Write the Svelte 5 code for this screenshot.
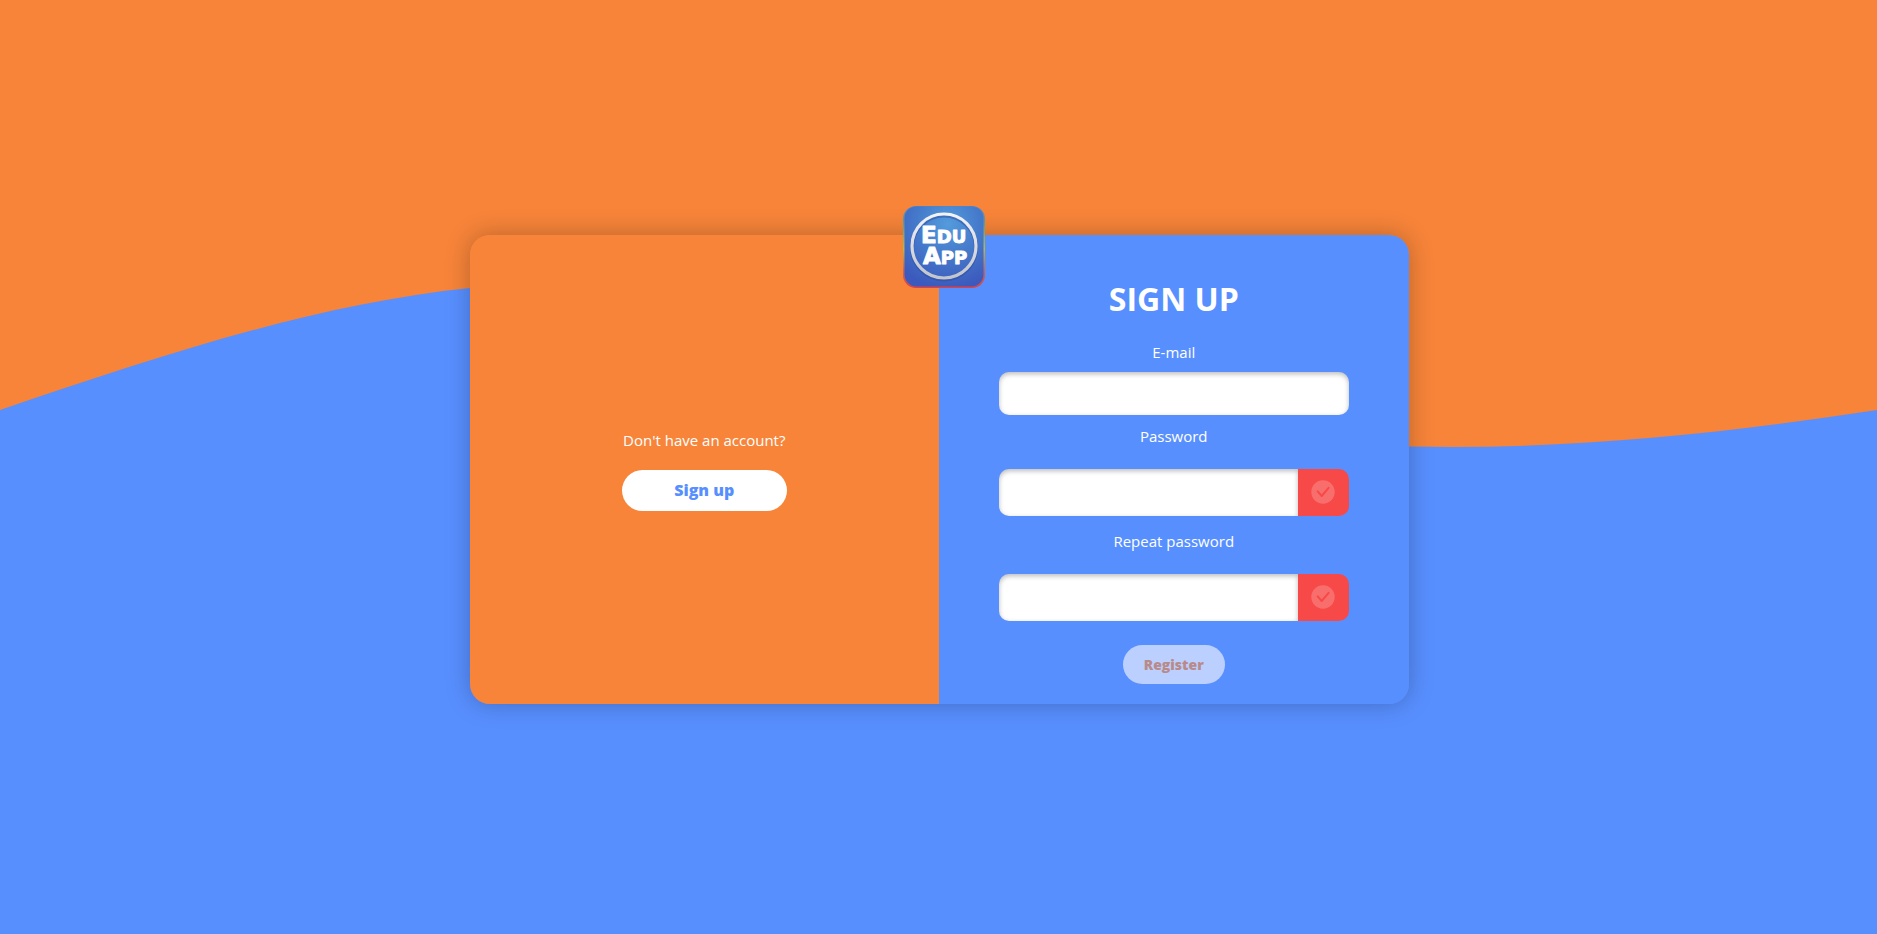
<script>
  let email = $state('');
  let password = $state('');
  let repeat = $state('');

  const matches = $derived(password.length > 0 && password === repeat);
  const ready = $derived(email.length > 0 && matches);
</script>

{#snippet check()}
  <span class="status" class:valid={matches}>
    <svg viewBox="0 0 24 24" aria-hidden="true">
      <circle cx="12" cy="12" r="11.7" />
      <path d="M6.7 11.3 L10.7 16 L17.6 7.8" />
    </svg>
  </span>
{/snippet}

<div class="page">
  <svg class="wave" viewBox="0 0 1877 934" preserveAspectRatio="none" aria-hidden="true">
    <path
      d="M0 410 C157 357 313 304 470 288 C780 258 1090 440 1409 446.5 C1565 450 1721 434 1877 410 V934 H0 Z"
    />
  </svg>

  <main class="card">
    <svg class="logo" viewBox="0 0 82 82" role="img" aria-label="Edu App">
      <defs>
        <linearGradient id="rim" x1="0" y1="0" x2="0" y2="1">
          <stop offset="0" stop-color="#4f86cc" />
          <stop offset="0.2" stop-color="#5d9a9c" />
          <stop offset="0.52" stop-color="#b5b84a" />
          <stop offset="0.78" stop-color="#c06a5a" />
          <stop offset="1" stop-color="#dc4048" />
        </linearGradient>
        <radialGradient id="face" cx="0.55" cy="0.22" r="0.8">
          <stop offset="0" stop-color="#549bdc" />
          <stop offset="0.5" stop-color="#457acb" />
          <stop offset="1" stop-color="#3c5abd" />
        </radialGradient>
        <linearGradient id="ring" x1="0" y1="0" x2="0" y2="1">
          <stop offset="0" stop-color="#f2f3f6" />
          <stop offset="1" stop-color="#c2c5cc" />
        </linearGradient>
      </defs>
      <rect width="82" height="82" rx="13" fill="url(#rim)" />
      <rect x="1.5" y="0.5" width="79" height="80" rx="12" fill="url(#face)" />
      <circle cx="41" cy="41.5" r="32" fill="none" stroke="#2c4c9e" stroke-opacity="0.5" stroke-width="4" />
      <circle cx="41" cy="40" r="32" fill="none" stroke="url(#ring)" stroke-width="3.2" />
      <text class="logo-text">
        <tspan class="cap" x="18" y="36.5">E</tspan><tspan>DU</tspan><tspan class="cap" x="20" y="57.5">A</tspan><tspan>PP</tspan>
      </text>
    </svg>

    <section class="panel invite">
      <div class="invite-box">
        <p>Don't have an account?</p>
        <button type="button" class="switch">Sign up</button>
      </div>
    </section>

    <section class="panel signup">
      <h1>SIGN UP</h1>
      <form onsubmit={(e) => e.preventDefault()}>
        <label for="email">E-mail</label>
        <input id="email" type="email" bind:value={email} />

        <label for="password">Password</label>
        <div class="secret">
          <input id="password" type="password" bind:value={password} />
          {@render check()}
        </div>

        <label for="repeat">Repeat password</label>
        <div class="secret">
          <input id="repeat" type="password" bind:value={repeat} />
          {@render check()}
        </div>

        <button type="submit" class="register" disabled={!ready}>Register</button>
      </form>
    </section>
  </main>
</div>

<style>
  :global(body) {
    margin: 0;
  }

  .page {
    --orange: #f78439;
    --blue: #588fff;
    --red: #f74a48;
    position: relative;
    box-sizing: border-box;
    min-height: 100vh;
    padding: 4px 0 0 1px;
    display: flex;
    align-items: center;
    justify-content: center;
    background: var(--orange);
    color: #fff;
    font-family: 'Segoe UI', 'Open Sans', 'Noto Sans', sans-serif;
    font-size: 15px;
    line-height: 24px;
  }

  .wave {
    position: absolute;
    inset: 0;
    width: 100%;
    height: 100%;
    fill: var(--blue);
  }

  .card {
    position: relative;
    display: grid;
    grid-template-columns: 1fr 1fr;
    width: calc(50% + 1px);
    min-width: 640px;
    border-radius: 20px;
    box-shadow: 0 0 25px rgba(0, 0, 0, 0.25);
  }

  .logo {
    position: absolute;
    top: -29px;
    left: calc(50% + 5px);
    width: 82px;
    height: 82px;
    transform: translateX(-50%);
  }

  .logo-text {
    fill: #fff;
    stroke: #fff;
    stroke-width: 1;
    stroke-linejoin: round;
    font: bold 18px 'DejaVu Sans', sans-serif;
  }

  .logo-text .cap {
    font-size: 23px;
  }

  .panel {
    display: flex;
    flex-direction: column;
    align-items: center;
  }

  .invite {
    justify-content: center;
    background: var(--orange);
    border-radius: 20px 0 0 20px;
  }

  .invite-box {
    display: flex;
    flex-direction: column;
    gap: 18px;
    text-align: center;
  }

  p,
  h1 {
    margin: 0;
  }

  button {
    border: 0;
    border-radius: 24px;
    background: #fff;
    font-family: inherit;
    font-weight: 800;
  }

  .switch {
    min-width: 165px;
    height: 41px;
    color: var(--blue);
    font-size: 16px;
  }

  .signup {
    padding: 42px 60px 20px;
    background: var(--blue);
    border-radius: 0 20px 20px 0;
  }

  h1 {
    font-size: 32px;
    line-height: 44px;
    font-weight: 700;
  }

  form {
    display: flex;
    flex-direction: column;
    align-items: center;
    width: 100%;
    margin-top: 19px;
  }

  input {
    box-sizing: border-box;
    width: 100%;
    height: 43px;
    padding: 0 12px;
    border: 0;
    border-radius: 10px;
    background: #fff;
    box-shadow: inset 0 2px 5px rgba(0, 0, 0, 0.27);
    font: inherit;
  }

  #email {
    margin: 8px 0 9px;
  }

  .secret {
    display: flex;
    width: 100%;
    margin: 21px 0 13px;
  }

  .secret input {
    flex: 1;
    min-width: 0;
    height: 47px;
    border-radius: 10px 0 0 10px;
  }

  .status {
    display: flex;
    align-items: center;
    justify-content: center;
    width: 51px;
    border-radius: 0 10px 10px 0;
    background: var(--red);
  }

  .status.valid {
    background: #3fbf6a;
  }

  .status svg {
    width: 24px;
    height: 24px;
  }

  .status circle {
    fill: #fff;
    fill-opacity: 0.2;
  }

  .status path {
    fill: none;
    stroke: var(--red);
    stroke-width: 2;
    stroke-linecap: round;
    stroke-linejoin: round;
  }

  .status.valid path {
    stroke: #3fbf6a;
  }

  .register {
    height: 39px;
    margin-top: 11px;
    padding: 0 21px;
    color: var(--orange);
    font-size: 14px;
  }

  .register:disabled {
    background: #bbd0ff;
    color: #b98a8a;
  }
</style>
